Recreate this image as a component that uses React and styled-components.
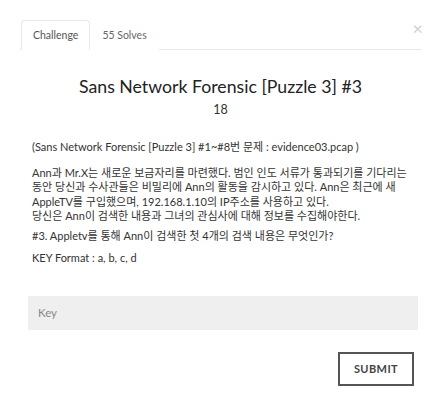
import styled, { createGlobalStyle } from 'styled-components'

const GlobalStyle = createGlobalStyle`
    body {
        margin: 0;
        background: #fff;
        font-family: Lato, "Noto Sans CJK KR", sans-serif;
        color: #333;
    }
`

const Modal = styled.div`
    width: 441px;
    height: 418px;
    box-sizing: border-box;
    padding: 20px 20px 0 20px;
    position: relative;
`

const CloseButton = styled.button`
    position: absolute;
    top: 19px;
    right: 18px;
    border: none;
    background: none;
    padding: 0;
    font-family: Lato, sans-serif;
    font-size: 18px;
    line-height: 18px;
    color: #cfcfcf;
    cursor: pointer;
`

const TabBar = styled.ul`
    display: flex;
    list-style: none;
    margin: 0;
    padding: 0 0 0 1px;
    border-bottom: 1px solid #e8e8e8;
`

const Tab = styled.li`
    height: 30px;
    box-sizing: border-box;
    padding: 0 11px;
    margin-bottom: -1px;
    display: flex;
    align-items: center;
    font-size: 10.5px;
    color: ${(p) => (p.active ? '#555' : '#666')};
    background: #fff;
    border: 1px solid ${(p) => (p.active ? '#e8e8e8' : 'transparent')};
    border-bottom-color: ${(p) => (p.active ? '#fff' : 'transparent')};
    border-radius: 4px 4px 0 0;
`

const Title = styled.h3`
    margin: 26px 0 0 0;
    text-align: center;
    font-weight: 400;
    font-size: 17.7px;
    line-height: 22px;
    color: #222;
`

const Value = styled.h4`
    margin: 4px 0 0 0;
    text-align: center;
    font-weight: 400;
    font-size: 12.5px;
    line-height: 16px;
    color: #333;
`

const Description = styled.div`
    margin-top: 22px;
    padding: 0 12px;
    font-size: 11px;
    line-height: 14.5px;
    color: #333;
`

const Paragraph = styled.p`
    margin: 0 0 ${(p) => p.gap}px 0;
`

const Form = styled.form`
    margin-top: 30px;
    padding: 0 3px 0 8px;
`

const KeyInput = styled.input`
    display: block;
    width: 100%;
    height: 34px;
    box-sizing: border-box;
    border: none;
    background: #efefef;
    padding: 0 10px;
    font-family: Lato, sans-serif;
    font-size: 11.5px;
    color: #333;
    outline: none;

    &::placeholder {
        color: #888;
    }
`

const Actions = styled.div`
    display: flex;
    justify-content: flex-end;
    margin-top: 22px;
    padding-right: 4px;
`

const SubmitButton = styled.button`
    width: 76px;
    height: 34px;
    box-sizing: border-box;
    border: 2px solid #555;
    background: #fff;
    font-family: Lato, sans-serif;
    font-weight: 700;
    font-size: 11px;
    letter-spacing: 0.4px;
    color: #444;
    cursor: pointer;
`

export default function App() {
    return (
        <Modal>
            <GlobalStyle />
            <CloseButton aria-label="Close">×</CloseButton>
            <TabBar>
                <Tab active>Challenge</Tab>
                <Tab>55 Solves</Tab>
            </TabBar>
            <Title>Sans Network Forensic [Puzzle 3] #3</Title>
            <Value>18</Value>
            <Description>
                <Paragraph gap={11}>(Sans Network Forensic [Puzzle 3] #1~#8번 문제 : evidence03.pcap )</Paragraph>
                <Paragraph gap={5}>
                    Ann과 Mr.X는 새로운 보금자리를 마련했다. 범인 인도 서류가 통과되기를 기다리는
                    동안 당신과 수사관들은 비밀리에 Ann의 활동을 감시하고 있다. Ann은 최근에 새
                    AppleTV를 구입했으며, 192.168.1.10의 IP주소를 사용하고 있다.
                    <br />
                    당신은 Ann이 검색한 내용과 그녀의 관심사에 대해 정보를 수집해야한다.
                </Paragraph>
                <Paragraph gap={8}>#3. Appletv를 통해 Ann이 검색한 첫 4개의 검색 내용은 무엇인가?</Paragraph>
                <Paragraph gap={0}>KEY Format : a, b, c, d</Paragraph>
            </Description>
            <Form onSubmit={(e) => e.preventDefault()}>
                <KeyInput type="text" placeholder="Key" />
                <Actions>
                    <SubmitButton type="submit">SUBMIT</SubmitButton>
                </Actions>
            </Form>
        </Modal>
    )
}
